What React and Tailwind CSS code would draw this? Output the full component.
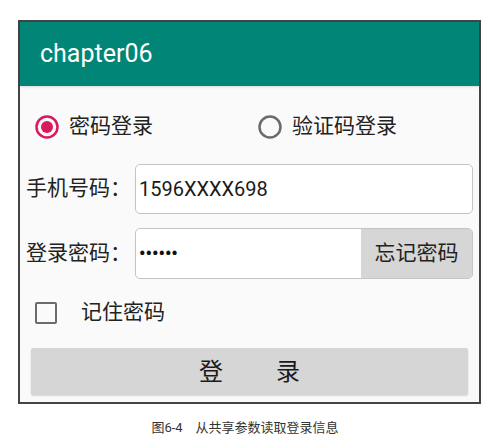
import { useState } from 'react';

const cjk = "font-['Roboto','Noto_Sans_CJK_SC',sans-serif]";

function Radio({ checked }) {
  return checked ? (
    <svg width="24" height="24" viewBox="0 0 24 24" className="shrink-0">
      <circle cx="12" cy="12" r="10.5" fill="none" stroke="#d81b60" strokeWidth="2.5" />
      <circle cx="12" cy="12" r="6" fill="#d81b60" />
    </svg>
  ) : (
    <svg width="24" height="24" viewBox="0 0 24 24" className="shrink-0">
      <circle cx="12" cy="12" r="10.5" fill="none" stroke="#6b6b6b" strokeWidth="2.5" />
    </svg>
  );
}

export default function App() {
  const [mode, setMode] = useState('password');
  const [remember, setRemember] = useState(false);

  return (
    <div className={`h-[437px] w-[490px] bg-white ${cjk} text-[#222]`}>
      <div className="ml-[18px] pt-[20px]">
        <div className="flex h-[384px] w-[463px] flex-col border-2 border-[#444] bg-[#fafafa]">
          <div className="flex h-[64px] shrink-0 items-center bg-[#008577] pl-[20px] text-[25px] text-white shadow-sm">
            chapter06
          </div>

          <div className="mt-[27px] flex h-[28px] items-center pl-[13px]">
            <button type="button" onClick={() => setMode('password')} className="flex flex-1 items-center gap-[10px] pl-[2px] text-[21px]">
              <Radio checked={mode === 'password'} />
              <span>密码登录</span>
            </button>
            <button type="button" onClick={() => setMode('code')} className="flex flex-1 items-center gap-[10px] pl-[2px] text-[21px]">
              <Radio checked={mode === 'code'} />
              <span>验证码登录</span>
            </button>
          </div>

          <div className="mt-[23px] flex h-[50px] items-center pl-[6px] pr-[6px]">
            <span className="w-[109px] shrink-0 text-[21px]">手机号码：</span>
            <div className="flex h-full flex-1 items-center rounded-[5px] border border-[#c4c4c4] bg-white pl-[3px] text-[20px] text-[#1a1a1a]">
              1596XXXX698
            </div>
          </div>

          <div className="mt-[14px] flex h-[51px] items-center pl-[6px] pr-[6px]">
            <span className="w-[109px] shrink-0 text-[21px]">登录密码：</span>
            <div className="flex h-full flex-1 items-stretch overflow-hidden rounded-[5px] border border-[#c4c4c4] bg-white">
              <div className="flex flex-1 items-center pl-[3px] text-[18px] font-bold text-[#111]">••••••</div>
              <button type="button" className="w-[111px] bg-[#d6d6d6] text-[21px] text-[#222]">
                忘记密码
              </button>
            </div>
          </div>

          <button
            type="button"
            onClick={() => setRemember((v) => !v)}
            className="mt-[22px] flex h-[24px] items-center pl-[15px] text-[21px]"
          >
            <span className="h-[22px] w-[22px] shrink-0 rounded-[2px] border-[2.5px] border-[#6b6b6b]" />
            <span className="ml-[24px]">记住密码</span>
          </button>

          <div className="mt-[23px] px-[11px]">
            <button
              type="button"
              className="flex h-[47px] w-full items-center justify-center gap-[53px] rounded-[2px] bg-[#d6d6d6] text-[24px] text-[#1a1a1a] shadow-[0_1px_2px_rgba(0,0,0,0.15)]"
            >
              <span>登</span>
              <span>录</span>
            </button>
          </div>
        </div>
      </div>
      <p className="mt-[16px] text-center text-[13px] leading-[15px] text-[#333]">图6-4　从共享参数读取登录信息</p>
    </div>
  );
}
